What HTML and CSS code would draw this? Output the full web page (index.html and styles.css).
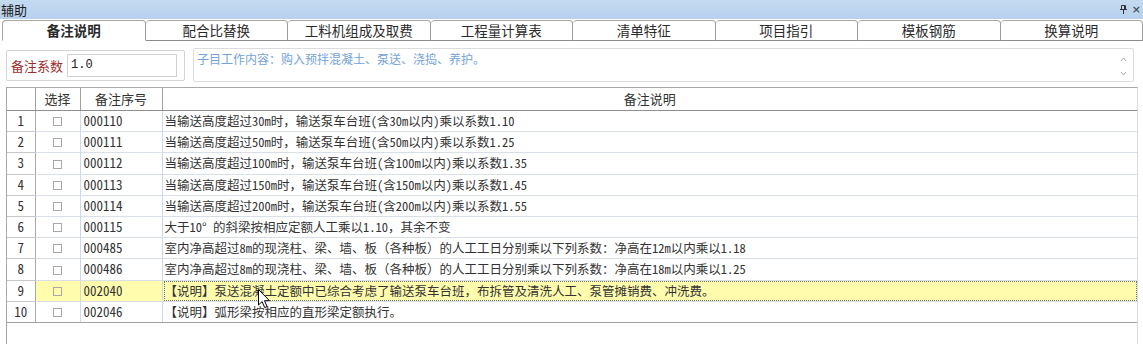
FILE: index.html
```html
<!DOCTYPE html>
<html lang="zh-CN">
<head>
  <meta charset="UTF-8" />
  <title>辅助</title>
  <link rel="stylesheet" href="styles.css">
</head>
<body>
  <div class="pane">
    <div class="titlebar">
      <span class="title">辅助</span>
      <span class="title-icons">
        <svg class="pin" width="7" height="9" viewBox="0 0 7 9">
          <path d="M1.5 0.5h4v4h-4z M0 4.5h7 M3.5 4.5v4.5" fill="none" stroke="#333" stroke-width="1"/>
          <path d="M4.5 0.5v4" stroke="#333" stroke-width="1"/>
        </svg>
        <span class="close">×</span>
      </span>
    </div>

    <div class="tabs">
      <div class="tab active">备注说明</div>
      <div class="tab">配合比替换</div>
      <div class="tab">工料机组成及取费</div>
      <div class="tab">工程量计算表</div>
      <div class="tab">清单特征</div>
      <div class="tab">项目指引</div>
      <div class="tab">模板钢筋</div>
      <div class="tab">换算说明</div>
    </div>

    <div class="note-bar">
      <div class="coef-box">
        <span class="coef-label">备注系数</span>
        <div class="coef-input">1.0</div>
      </div>
      <div class="work-box">
        <span class="work-text">子目工作内容：购入预拌混凝土、泵送、浇捣、养护。</span>
        <div class="scroll-arrows">
          <svg width="7" height="5" viewBox="0 0 7 5"><path d="M1 4l2.5-3 2.5 3" fill="none" stroke="#aaa"/></svg>
          <svg width="7" height="5" viewBox="0 0 7 5"><path d="M1 1l2.5 3 2.5-3" fill="none" stroke="#aaa"/></svg>
        </div>
      </div>
    </div>

    <div class="grid-wrap">
      <table class="grid">
        <colgroup>
          <col class="c-num"><col class="c-check"><col class="c-code"><col>
        </colgroup>
        <thead>
          <tr><th></th><th>选择</th><th>备注序号</th><th>备注说明</th></tr>
        </thead>
        <tbody id="rows"></tbody>
      </table>
      <svg class="cursor" width="13" height="20" viewBox="0 0 13 20">
        <path d="M0.5 0.5v15.5l3.6-3.4 2.6 6 2.4-1-2.6-5.9h5z" fill="#fff" stroke="#000" stroke-width="1"/>
      </svg>
    </div>
  </div>

  <script>
    const notes = [
      ['000110', '当输送高度超过30m时，输送泵车台班(含30m以内)乘以系数1.10'],
      ['000111', '当输送高度超过50m时，输送泵车台班(含50m以内)乘以系数1.25'],
      ['000112', '当输送高度超过100m时，输送泵车台班(含100m以内)乘以系数1.35'],
      ['000113', '当输送高度超过150m时，输送泵车台班(含150m以内)乘以系数1.45'],
      ['000114', '当输送高度超过200m时，输送泵车台班(含200m以内)乘以系数1.55'],
      ['000115', '大于10° 的斜梁按相应定额人工乘以1.10，其余不变'],
      ['000485', '室内净高超过8m的现浇柱、梁、墙、板（各种板）的人工工日分别乘以下列系数：净高在12m以内乘以1.18'],
      ['000486', '室内净高超过8m的现浇柱、梁、墙、板（各种板）的人工工日分别乘以下列系数：净高在18m以内乘以1.25'],
      ['002040', '【说明】泵送混凝土定额中已综合考虑了输送泵车台班，布拆管及清洗人工、泵管摊销费、冲洗费。'],
      ['002046', '【说明】弧形梁按相应的直形梁定额执行。']
    ];
    const selectedRow = 9;
    const tbody = document.getElementById('rows');

    notes.forEach(([code, text], i) => {
      const tr = document.createElement('tr');
      if (i + 1 === selectedRow) tr.classList.add('selected');
      tr.innerHTML =
        `<td class="num">${i + 1}</td>` +
        `<td class="check"><span class="box"></span></td>` +
        `<td class="code">${code}</td>` +
        `<td class="text"><div class="cell">${text}</div></td>`;
      tbody.appendChild(tr);
    });
  </script>
</body>
</html>
```

FILE: styles.css
```css
html, body {
  margin: 0;
  padding: 0;
  height: 100%;
  background: #fff;
}
body {
  font-family: "Noto Sans Mono CJK SC", "Noto Sans CJK SC", sans-serif;
  font-size: 13px;
  color: #333;
  overflow: hidden;
}
.pane {
  display: flex;
  flex-direction: column;
  height: 100%;
}
.titlebar {
  height: 19px;
  background: linear-gradient(#c4daf1, #b7d0ec);
  display: flex;
  align-items: center;
  justify-content: space-between;
  padding: 0 2px 0 1px;
}
.title {
  font-size: 13px;
  line-height: 19px;
  color: #1c1c1c;
}
.title-icons {
  display: flex;
  align-items: center;
  gap: 5px;
  color: #333;
}
.title-icons .close {
  font-family: "DejaVu Sans", sans-serif;
  font-size: 11px;
  line-height: 11px;
}
.tabs {
  display: flex;
  height: 21px;
  margin-top: 1px;
  padding-left: 2px;
}
.tab {
  flex: 1;
  box-sizing: border-box;
  border-top: 1px solid #a6a6a6;
  border-right: 1px solid #9c9c9c;
  border-bottom: 1px solid #8c8c8c;
  border-radius: 4px 4px 0 0;
  text-align: center;
  font-size: 13.5px;
  line-height: 19px;
  color: #2a2a2a;
  background: #fff;
}
.tab.active {
  border-left: 1px solid #a6a6a6;
  border-bottom-color: #fff;
  font-weight: bold;
}
.note-bar {
  display: flex;
  align-items: flex-start;
  height: 46px;
  padding: 0 9px 0 6px;
  gap: 8px;
}
.coef-box {
  margin-top: 9px;
  width: 179px;
  height: 31px;
  box-sizing: border-box;
  border: 1px solid #d4d4d4;
  border-radius: 2px;
  display: flex;
  align-items: center;
  padding: 0 7px 0 4px;
  gap: 4px;
}
.coef-label {
  color: #9b2f2f;
  font-size: 13px;
  white-space: nowrap;
}
.coef-input {
  flex: 1;
  height: 23px;
  box-sizing: border-box;
  border: 1px solid #d0d0d0;
  padding-left: 3px;
  font-family: "Liberation Mono", monospace;
  font-size: 12px;
  line-height: 21px;
  color: #222;
}
.work-box {
  flex: 1;
  margin-top: 7px;
  height: 34px;
  box-sizing: border-box;
  border: 1px solid #dcdcdc;
  border-radius: 2px;
  position: relative;
  padding: 0 3px;
}
.work-text {
  color: #73a3d8;
  font-size: 12px;
  line-height: 14px;
}
.scroll-arrows {
  position: absolute;
  right: 6px;
  top: 8px;
  display: flex;
  flex-direction: column;
  gap: 9px;
}
.scroll-arrows svg {
  display: block;
}
.grid-wrap {
  flex: 1;
  position: relative;
  margin-left: 6px;
  width: 1132px;
  box-sizing: border-box;
  border: 1px solid #a8a8a8;
  border-bottom: none;
  border-right-color: #d6dde6;
}
.grid {
  width: 100%;
  border-collapse: collapse;
  table-layout: fixed;
}
.c-num { width: 28px; }
.c-check { width: 45px; }
.c-code { width: 82px; }
.grid th {
  height: 21px;
  padding: 0 0 1px;
  font-weight: normal;
  font-size: 13px;
  line-height: 17px;
  color: #333;
  border-left: 1px solid #a0a0a0;
  border-bottom: 1px solid #8f8f8f;
}
.grid th:first-child {
  border-left: none;
}
.grid td {
  height: 20.2px;
  padding: 0;
  font-size: 12.5px;
  border-left: 1px solid #cbd9ea;
  border-bottom: 1px solid #d8dfe8;
  white-space: nowrap;
  overflow: hidden;
  line-height: 18px;
}
.grid tr:last-child td {
  border-bottom-color: #a0a0a0;
}
.grid td.num {
  border-left: none;
  border-right: 1px solid #a8a8a8;
  border-bottom-color: #c8c8c8;
  text-align: center;
  font-size: 13px;
}
.grid td.check {
  text-align: center;
}
.box {
  display: inline-block;
  width: 9px;
  height: 9px;
  box-sizing: border-box;
  border: 1px solid #a9a9a9;
  vertical-align: middle;
  margin-top: -2px;
}
.grid td.code {
  padding-left: 3px;
  font-size: 13px;
}
.grid td.text {
  padding-left: 2px;
}
.grid tr.selected td:not(.num) {
  background: #fffcae;
}
.grid tr.selected .cell {
  outline: 1px dotted #707070;
  outline-offset: 0;
  margin-right: 1px;
}
.cursor {
  position: absolute;
  left: 251px;
  top: 201px;
}
```
